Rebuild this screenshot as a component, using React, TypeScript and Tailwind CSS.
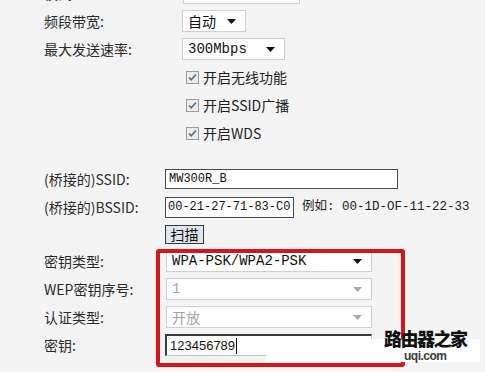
import React from "react";

const CJK = "font-['Noto_Sans_CJK_SC',sans-serif]";
const MONO = "font-['Liberation_Mono','Noto_Sans_CJK_SC',monospace]";

/** Small down-pointing triangle used by the legacy select boxes. */
function Arrow({ muted = false }: { muted?: boolean }) {
  return (
    <svg width="9" height="5" viewBox="0 0 9 5" className="shrink-0">
      <path d="M0 0h9L4.5 5z" fill={muted ? "#a8a8a8" : "#111"} />
    </svg>
  );
}

function Select({
  value,
  width,
  muted = false,
  mono = false,
}: {
  value: string;
  width: string;
  muted?: boolean;
  mono?: boolean;
}) {
  return (
    <div
      className={`flex h-[22px] items-center justify-between border border-[#cfcfcf] bg-white pl-[5px] pr-[9px] text-[14px] ${width} ${
        muted ? "text-[#a3a3a3]" : "text-[#111]"
      } ${mono ? MONO : CJK}`}
    >
      <span className="whitespace-nowrap leading-none">{value}</span>
      <Arrow muted={muted} />
    </div>
  );
}

function Check({ label }: { label: string }) {
  return (
    <div className="flex h-[28px] items-center gap-[4px] pl-[186px]">
      <svg width="13" height="13" viewBox="0 0 13 13">
        <rect x="0.5" y="0.5" width="12" height="12" fill="#ececec" stroke="#9a9a9a" />
        <path d="M3 6.5l2.2 2.4L10 3.5" fill="none" stroke="#5a6b86" strokeWidth="1.6" />
      </svg>
      <span className={`text-[14px] text-[#222] ${CJK}`}>{label}</span>
    </div>
  );
}

function Row({
  label,
  pad,
  children,
}: {
  label: string;
  pad: string;
  children?: React.ReactNode;
}) {
  return (
    <div className="flex h-[28px] items-center">
      <span className={`shrink-0 whitespace-nowrap pl-[44px] text-[14px] text-[#2b2b2b] ${pad} ${CJK}`}>{label}</span>
      {children}
    </div>
  );
}

export default function App() {
  return (
    <div className="relative h-[372px] w-[485px] overflow-hidden bg-[#f4f4f4]">
      <div className="flex flex-col">
        {/* Clipped row at the very top */}
        <div className="-mt-[21px] flex h-[28px] items-center">
          <span className={`w-[183px] shrink-0 pl-[44px] text-[14px] text-[#2b2b2b] ${CJK}`}>模式：</span>
          <Select value="11bgn mixed" width="w-[117px]" mono />
        </div>

        <Row label="频段带宽:" pad="w-[182px]">
          <Select value="自动" width="w-[64px]" />
        </Row>
        <Row label="最大发送速率:" pad="w-[182px]">
          <Select value="300Mbps" width="w-[103px]" mono />
        </Row>

        <Check label="开启无线功能" />
        <Check label="开启SSID广播" />
        <Check label="开启WDS" />

        <div className="h-[18px]" />

        <Row label="(桥接的)SSID:" pad="w-[165px]">
          <div className={`flex h-[20px] w-[233px] items-center border border-[#4a4a4a] bg-white px-[3px] text-[12px] text-[#111] ${MONO}`}>
            MW300R_B
          </div>
        </Row>
        <Row label="(桥接的)BSSID:" pad="w-[165px]">
          <div className={`flex h-[21px] w-[129px] items-center overflow-hidden whitespace-nowrap border border-[#4a4a4a] bg-white px-[2px] text-[12px] text-[#111] ${MONO}`}>
            00-21-27-71-83-C0
          </div>
          <span className={`whitespace-nowrap pl-[8px] text-[12.5px] text-[#222] ${MONO}`}>例如: 00-1D-OF-11-22-33</span>
        </Row>
        <div className="flex h-[26px] items-center pl-[165px]">
          <button
            type="button"
            className={`flex h-[19px] w-[39px] items-center justify-center border border-[#3a3a3a] bg-[#dfe6ee] text-[14px] text-[#111] ${CJK}`}
          >
            扫描
          </button>
        </div>

        <Row label="密钥类型:" pad="w-[166px]">
          <Select value="WPA-PSK/WPA2-PSK" width="w-[206px]" mono />
        </Row>
        <Row label="WEP密钥序号:" pad="w-[166px]">
          <Select value="1" width="w-[206px]" muted mono />
        </Row>
        <Row label="认证类型:" pad="w-[166px]">
          <Select value="开放" width="w-[206px]" muted />
        </Row>
        <Row label="密钥:" pad="w-[165px]">
          <div className="flex h-[22px] w-[207px] items-center border-t-2 border-l-2 border-r border-b border-t-[#3a3a3a] border-l-[#3a3a3a] border-r-[#c8c8c8] border-b-[#c8c8c8] bg-white pl-[3px] text-[13px] text-[#111] font-['Liberation_Sans',sans-serif]">
            123456789
            <span className="ml-[1px] h-[16px] w-px bg-black" />
          </div>
        </Row>
      </div>

      {/* Red annotation frame around the key settings */}
      <div className="pointer-events-none absolute left-[156px] top-[249px] h-[118px] w-[249px] rounded-[3px] border-4 border-[#d8141b]" />

      {/* Site watermark */}
      <div className="pointer-events-none absolute left-[266px] top-[339px] h-[23px] w-[214px] bg-white" />
      <div className="pointer-events-none absolute left-[404px] top-[350px] text-[12px] font-black leading-none tracking-[-0.5px] text-[#3a3a3a] font-['Liberation_Sans',sans-serif]">
        uqi.com
      </div>
      <div className="pointer-events-none absolute left-[384px] top-[329px] text-[18px] font-black leading-[18px] tracking-[-1.5px] text-[#111] font-['Noto_Sans_CJK_SC',sans-serif]">
        路由器之家
      </div>
    </div>
  );
}
